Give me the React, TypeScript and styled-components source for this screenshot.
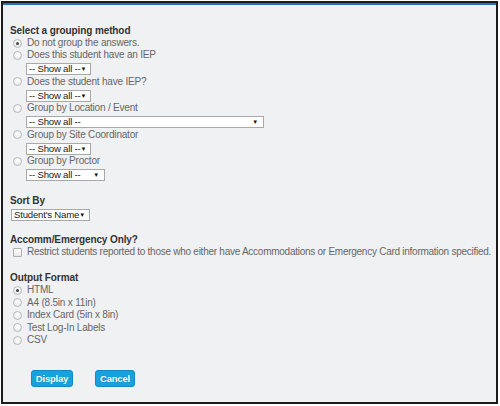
import React from "react";
import styled, { createGlobalStyle } from "styled-components";

const Global = createGlobalStyle`
  html, body { margin: 0; padding: 0; background: #ffffff; }
  body { font-family: "Liberation Sans", Arial, sans-serif; }
`;

const Frame = styled.div`
  box-sizing: border-box;
  margin: 1px 0 0 1px;
  width: 497px;
  height: 403px;
  border: 2px solid #1b1b1b;
  background: #f0f1f3;
  display: flex;
  flex-direction: column;
  overflow: hidden;
`;

const TopBar = styled.div`
  height: 2px;
  background: #2a6fbd;
  flex: none;
`;

const Content = styled.div`
  padding: 19px 0 0 7px;
  display: flex;
  flex-direction: column;
  font-size: 10px;
  letter-spacing: -0.2px;
  color: #666;
`;

const Section = styled.div<{ $gap?: number }>`
  display: flex;
  flex-direction: column;
  margin-top: ${(p) => p.$gap ?? 0}px;
`;

const Heading = styled.div`
  font-weight: bold;
  color: #333;
  font-size: 10px;
  letter-spacing: -0.1px;
  line-height: 13px;
  height: 13px;
`;

const OptionRow = styled.label<{ $h?: number; $tight?: boolean }>`
  display: flex;
  align-items: center;
  height: ${(p) => p.$h ?? 12}px;
  line-height: ${(p) => p.$h ?? 12}px;
  white-space: nowrap;
  letter-spacing: ${(p) => (p.$tight ? "-0.26px" : "-0.2px")};
`;

const Radio = styled.span<{ $checked?: boolean }>`
  box-sizing: border-box;
  width: 9px;
  height: 9px;
  margin: 0 5px 0 3px;
  border-radius: 50%;
  border: 1px solid #b8b8b8;
  background: radial-gradient(circle at 50% 35%, #ffffff 0%, #e6e6e6 100%);
  display: flex;
  align-items: center;
  justify-content: center;
  flex: none;
  &::after {
    content: "";
    width: 3px;
    height: 3px;
    border-radius: 50%;
    background: ${(p) => (p.$checked ? "#444" : "transparent")};
  }
`;

const Checkbox = styled.span`
  box-sizing: border-box;
  width: 9px;
  height: 9px;
  margin: 0 5px 0 3px;
  border: 1px solid #b0b0b0;
  border-radius: 1px;
  background: linear-gradient(#ffffff, #e8e8e8);
  flex: none;
`;

const SelectRow = styled.div<{ $indent?: number }>`
  box-sizing: border-box;
  height: 14.5px;
  display: flex;
  align-items: flex-end;
  padding-bottom: 0.5px;
  padding-left: ${(p) => p.$indent ?? 0}px;
`;

const SelectBox = styled.div<{ $w: number }>`
  box-sizing: border-box;
  width: ${(p) => p.$w}px;
  height: 12px;
  border: 1px solid #a9a9a9;
  background: #fff;
  color: #222;
  display: flex;
  align-items: center;
  justify-content: space-between;
  padding: 0 5px 0 2px;
  font-size: 9.6px;
  letter-spacing: -0.2px;
  line-height: 10px;
  white-space: nowrap;
`;

const Arrow = styled.span`
  font-size: 6px;
  color: #111;
`;

const ButtonBar = styled.div`
  display: flex;
  gap: 22px;
  padding-left: 21px;
  margin-top: 23px;
`;

const Button = styled.button<{ $w: number }>`
  box-sizing: border-box;
  width: ${(p) => p.$w}px;
  height: 17px;
  padding: 0;
  border: 1px solid #1689c2;
  border-radius: 3px;
  background: #18a2dd;
  color: #fff;
  font-family: "Liberation Sans", Arial, sans-serif;
  font-weight: bold;
  font-size: 9.5px;
  letter-spacing: -0.2px;
  text-shadow: 0 0 1px rgba(0, 0, 0, 0.35);
  cursor: pointer;
`;

function Select({ w, text, indent = 16 }: { w: number; text: string; indent?: number }) {
  return (
    <SelectRow $indent={indent}>
      <SelectBox $w={w}>
        <span>{text}</span>
        <Arrow>▼</Arrow>
      </SelectBox>
    </SelectRow>
  );
}

function Opt({ label, checked, h }: { label: string; checked?: boolean; h?: number }) {
  return (
    <OptionRow $h={h}>
      <Radio $checked={checked} />
      {label}
    </OptionRow>
  );
}

export default function App() {
  return (
    <>
      <Global />
      <Frame>
        <TopBar />
        <Content>
          <Section>
            <Heading>Select a grouping method</Heading>
            <Opt label="Do not group the answers." checked />
            <Opt label="Does this student have an IEP" />
            <Select w={65} text="-- Show all --" />
            <Opt label="Does the student have IEP?" />
            <Select w={65} text="-- Show all --" />
            <Opt label="Group by Location / Event" />
            <Select w={238} text="-- Show all --" />
            <Opt label="Group by Site Coordinator" />
            <Select w={65} text="-- Show all --" />
            <Opt label="Group by Proctor" />
            <Select w={79} text="-- Show all --" />
          </Section>
          <Section $gap={12}>
            <Heading>Sort By</Heading>
            <Select w={79} text="Student's Name" indent={1} />
          </Section>
          <Section $gap={12}>
            <Heading>Accomm/Emergency Only?</Heading>
            <OptionRow $tight>
              <Checkbox />
              Restrict students reported to those who either have Accommodations or Emergency Card information specified.
            </OptionRow>
          </Section>
          <Section $gap={13}>
            <Heading>Output Format</Heading>
            <Opt label="HTML" checked h={12.5} />
            <Opt label="A4 (8.5in x 11in)" h={12.5} />
            <Opt label="Index Card (5in x 8in)" h={12.5} />
            <Opt label="Test Log-In Labels" h={12.5} />
            <Opt label="CSV" h={12.5} />
          </Section>
          <ButtonBar>
            <Button $w={42}>Display</Button>
            <Button $w={40}>Cancel</Button>
          </ButtonBar>
        </Content>
      </Frame>
    </>
  );
}
